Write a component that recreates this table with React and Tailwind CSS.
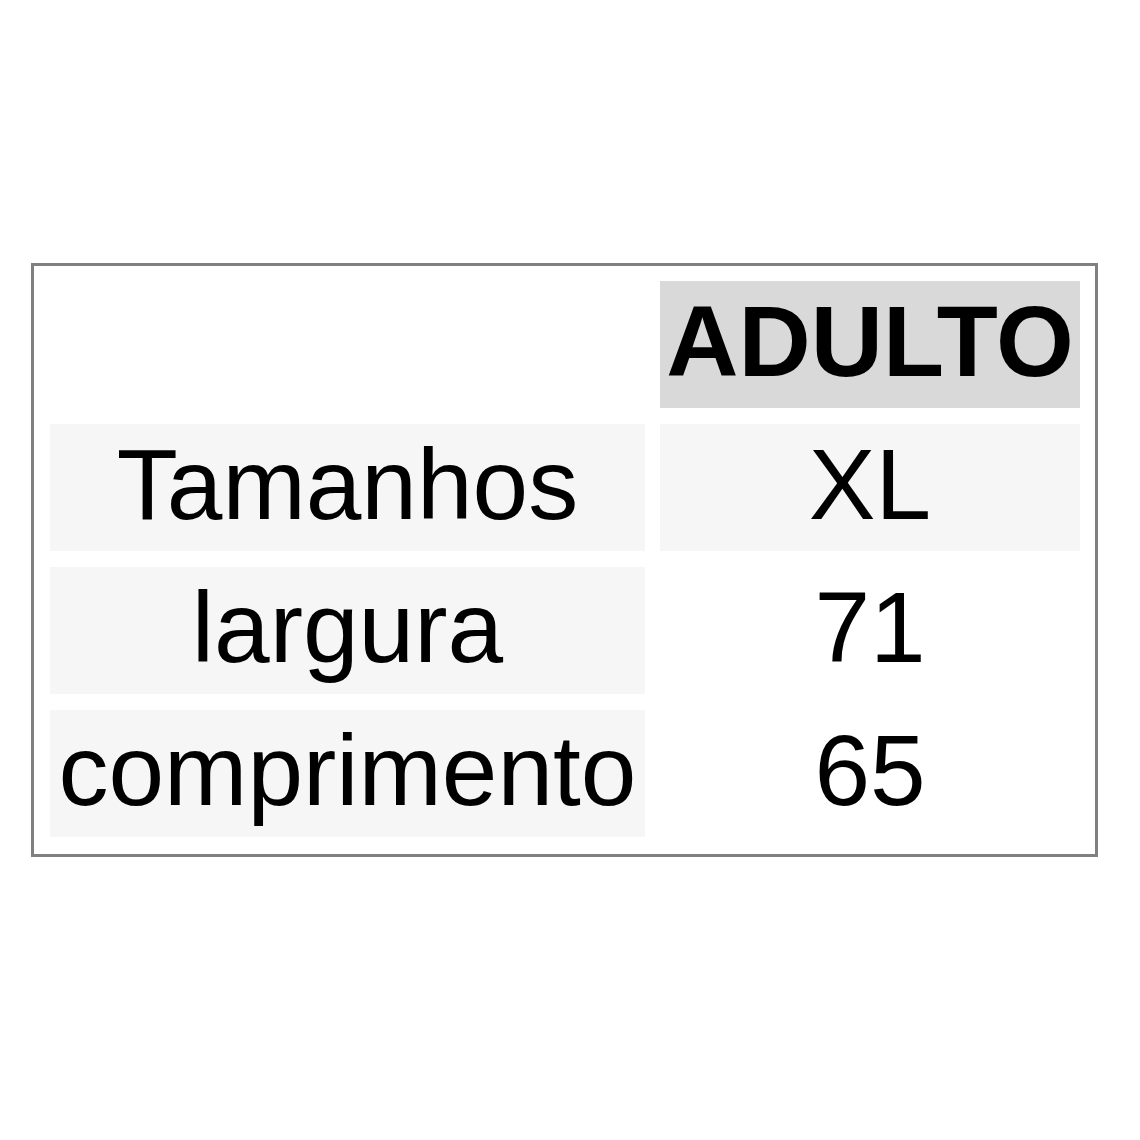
export default function App() {
  const font = { fontFamily: '"Liberation Sans", Arial, sans-serif' };
  const cell = "flex h-[127px] items-center justify-center pb-[8px] text-[100px] leading-none text-black whitespace-nowrap";
  return (
    <div className="min-h-[1140px] w-[1140px] bg-white pl-[31px] pt-[263px]" style={font}>
      <div className="grid w-[1067px] grid-cols-[595px_420px] gap-x-[15px] gap-y-[16px] border-[3px] border-[#808080] pl-[16px] pr-[15px] pt-[15px] pb-[17px]">
        <div className="h-[127px]"></div>
        <div className={`${cell} bg-[#d9d9d9] font-bold`}>ADULTO</div>

        <div className={`${cell} bg-[#f6f6f6]`}>Tamanhos</div>
        <div className={`${cell} bg-[#f6f6f6]`}>XL</div>

        <div className={`${cell} bg-[#f6f6f6]`}>largura</div>
        <div className={`${cell} bg-white`}>71</div>

        <div className={`${cell} bg-[#f6f6f6]`}>comprimento</div>
        <div className={`${cell} bg-white`}>65</div>
      </div>
    </div>
  );
}
